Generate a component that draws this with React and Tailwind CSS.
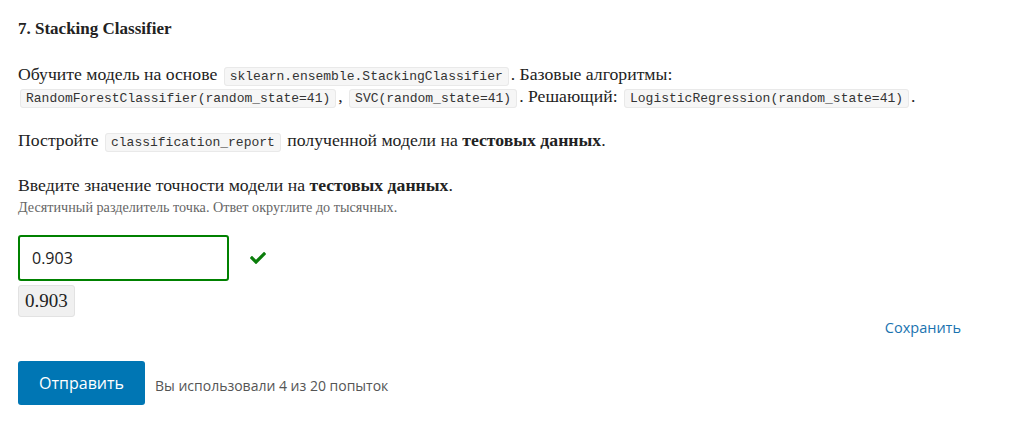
import React, { useState } from 'react';
import { FaCheck } from 'react-icons/fa';

const serif = { fontFamily: '"Liberation Serif", "DejaVu Serif", serif' };

function Code({ children }) {
  return (
    <code className="mx-[2px] rounded-[3px] border border-[#e9e9e9] bg-[#f6f6f6] px-[5px] py-[1px] font-['Liberation_Mono',monospace] text-[13px] leading-[16px] text-[#333]">
      {children}
    </code>
  );
}

export default function App() {
  const [answer, setAnswer] = useState('0.903');

  return (
    <section className="min-h-screen bg-white px-[18px] pt-[19px] text-[#222]" style={serif}>
      <h2 className="text-[17px] font-bold leading-5">7. Stacking Classifier</h2>

      <p className="mt-[24px] text-[17.7px] leading-[22px]">
        Обучите модель на основе <Code>sklearn.ensemble.StackingClassifier</Code>. Базовые алгоритмы:
        <br />
        <Code>RandomForestClassifier(random_state=41)</Code>, <Code>SVC(random_state=41)</Code>. Решающий:{' '}
        <Code>LogisticRegression(random_state=41)</Code>.
      </p>

      <p className="mt-[22px] text-[17.7px] leading-[22px]">
        Постройте <Code>classification_report</Code> полученной модели на <b>тестовых данных</b>.
      </p>

      <p className="mt-[23px] text-[17.7px] leading-[22px]">
        Введите значение точности модели на <b>тестовых данных</b>.
      </p>
      <p className="mt-[2px] text-[14.2px] leading-[18px] text-[#666]">
        Десятичный разделитель точка. Ответ округлите до тысячных.
      </p>

      <div className="mt-[19px] flex items-center gap-[21px]">
        <input
          type="text"
          value={answer}
          onChange={(e) => setAnswer(e.target.value)}
          className="h-[46px] w-[211px] rounded-[3px] border-2 border-[#008100] px-3 font-['Open_Sans',sans-serif] text-[16px] text-[#222] outline-none"
        />
        <FaCheck className="text-[16px] text-[#0a7d0a]" />
      </div>

      <div className="mt-[4px] inline-block rounded-[3px] border border-[#e2e2e2] bg-[#f0f0f0] px-[6px] py-[3px] text-[19px] leading-[24px]">
        {answer}
      </div>

      <div className="flex justify-end pr-[32px]">
        <button className="font-['Open_Sans',sans-serif] text-[14.5px] font-medium text-[#1a73b0]">
          Сохранить
        </button>
      </div>

      <div className="mt-[22px] flex items-center gap-[10px]">
        <button className="h-[44px] w-[127px] rounded-[3px] bg-[#0076b4] font-['Open_Sans',sans-serif] text-[16px] text-white">
          Отправить
        </button>
        <span className="mt-[5px] font-['Open_Sans',sans-serif] text-[14px] text-[#555]">
          Вы использовали 4 из 20 попыток
        </span>
      </div>
    </section>
  );
}
